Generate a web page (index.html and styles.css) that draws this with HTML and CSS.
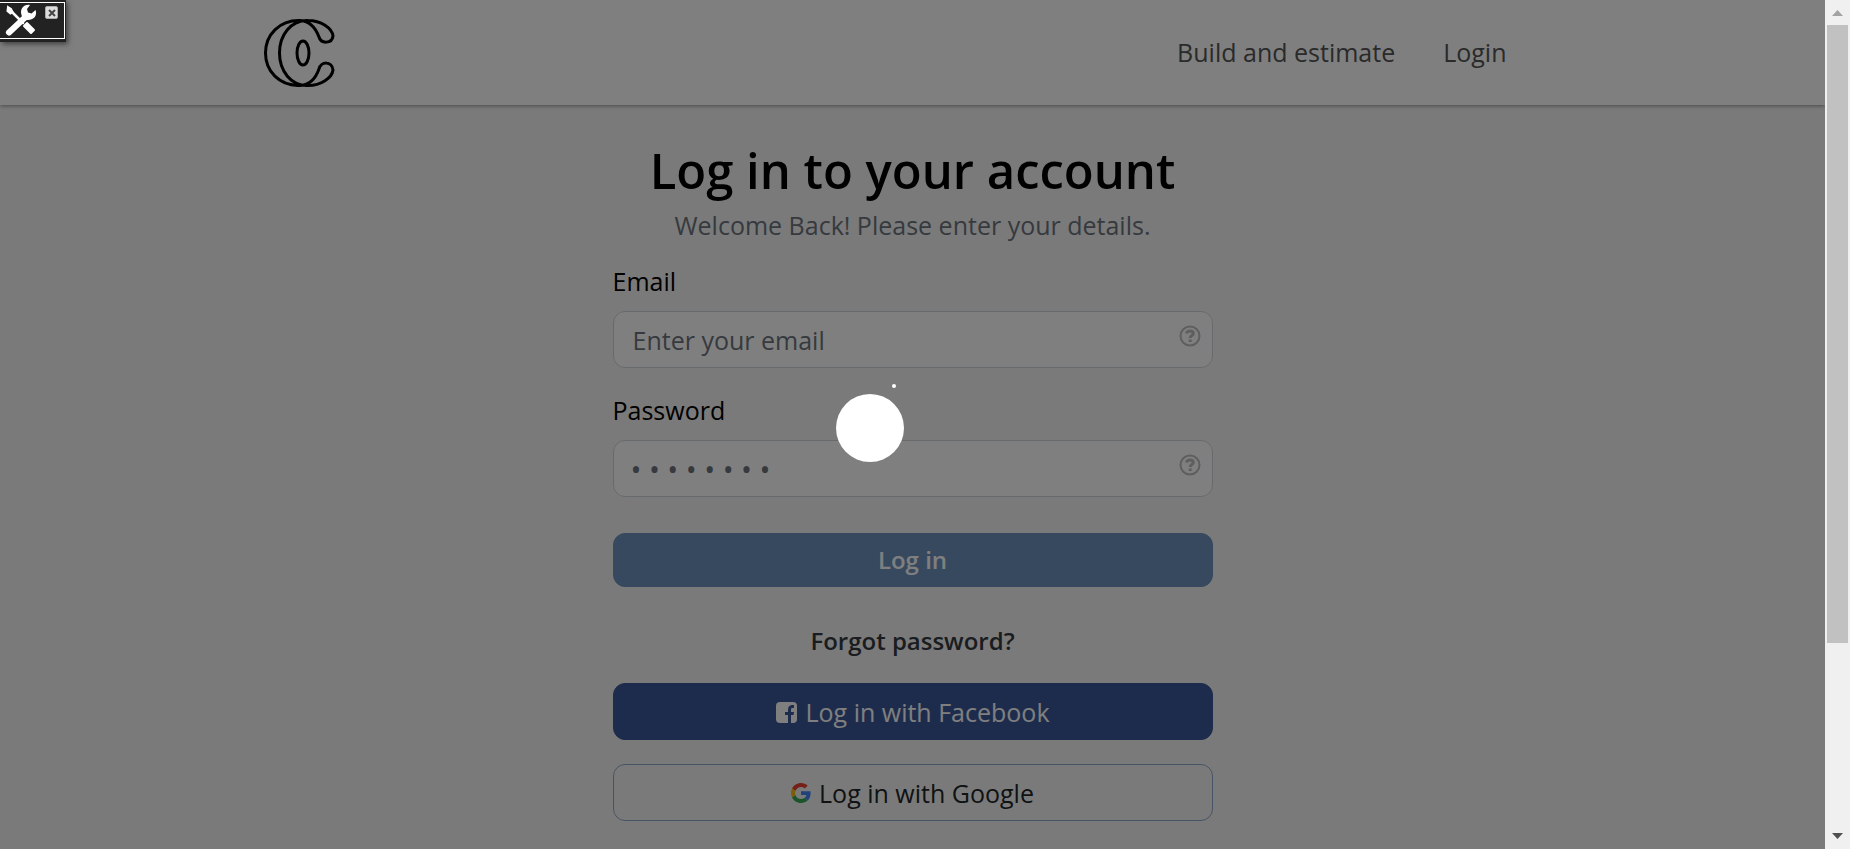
FILE: index.html
```html
<!DOCTYPE html>
<html lang="en">
<head>
<meta charset="utf-8">
<title>Log in to your account</title>
<link rel="stylesheet" href="styles.css">
</head>
<body>
<div class="page">
  <header class="header">
    <div class="container">
      <a class="brand" href="#" aria-label="Home">
        <svg width="72" height="70" viewBox="0 0 72 70" fill="none" stroke="#000" stroke-width="3">
          <path d="M37 68.500C16 69 2.500 54 2.500 36S16 3 37 3.500C48 4 53 12 56 20C58 27 69 27 70 19C69 11 58 3.500 45 3.500C28 3 16.500 18 16.500 36S28 69 45 68.500C58 68.500 69 61 70 53C69 44 58 44 56 52C53.500 59 48 68 37 68.500Z"/>
          <ellipse cx="40" cy="36" rx="6" ry="12"/>
        </svg>
      </a>
      <nav class="nav">
        <a href="#">Build and estimate</a>
        <a href="#">Login</a>
      </nav>
    </div>
  </header>
  <main class="main">
    <form class="login">
      <h1 class="title">Log in to your account</h1>
      <p class="lead">Welcome Back! Please enter your details.</p>
      <label class="label" for="email">Email</label>
      <div class="field">
        <input class="input" id="email" type="email" placeholder="Enter your email">
        <svg class="hint" width="22" height="22" viewBox="0 0 22 22" fill="none" stroke="#bdbdbd"><circle cx="11" cy="11" r="9.500" stroke-width="2"/><path d="M7.500 8.500C8 6.500 9.300 6 11 6C13 6 14.300 7 14.300 8.500C14.300 10.700 11.200 10.500 11.200 13M11.200 14.500V17" stroke-width="3"/></svg>
      </div>
      <label class="label" for="password">Password</label>
      <div class="field">
        <input class="input dots" id="password" type="password" placeholder="• • • • • • • •">
        <svg class="hint" width="22" height="22" viewBox="0 0 22 22" fill="none" stroke="#bdbdbd"><circle cx="11" cy="11" r="9.500" stroke-width="2"/><path d="M7.500 8.500C8 6.500 9.300 6 11 6C13 6 14.300 7 14.300 8.500C14.300 10.700 11.200 10.500 11.200 13M11.200 14.500V17" stroke-width="3"/></svg>
      </div>
      <button class="button submit" type="submit">Log in</button>
      <a class="forgot" href="#">Forgot password?</a>
      <button class="button facebook" type="button">
        <svg width="22" height="22" viewBox="0 0 22 22"><rect x="1" y="1" width="21" height="21" rx="4" fill="#fff"/><path d="M13 22V14H10V11H13V8.500C13 5.500 14.800 4 17.300 4H19V7H17.500C16.300 7 16 7.600 16 8.600V11H19L18.500 14H16V22Z" fill="#3b5998"/></svg>
        <span>Log in with Facebook</span>
      </button>
      <button class="button google" type="button">
        <svg width="20" height="20" viewBox="0 0 48 48"><path fill="#EA4335" d="M24 9.500c3.540 0 6.710 1.220 9.210 3.600l6.850-6.850C35.900 2.380 30.470 0 24 0 14.620 0 6.510 5.380 2.560 13.220l7.980 6.190C12.430 13.720 17.740 9.500 24 9.500z"/><path fill="#4285F4" d="M46.980 24.550c0-1.570-.15-3.090-.38-4.550H24v9.020h12.940c-.58 2.960-2.260 5.480-4.780 7.180l7.730 6c4.510-4.180 7.090-10.360 7.090-17.650z"/><path fill="#FBBC05" d="M10.530 28.590c-.48-1.450-.76-2.990-.76-4.590s.27-3.140.76-4.590l-7.980-6.190C.92 16.460 0 20.120 0 24s.92 7.540 2.560 10.780l7.970-6.190z"/><path fill="#34A853" d="M24 48c6.480 0 11.930-2.130 15.890-5.810l-7.730-6c-2.150 1.450-4.920 2.300-8.160 2.300-6.260 0-11.570-4.220-13.470-9.910l-7.980 6.190C6.510 42.620 14.620 48 24 48z"/></svg>
        <span>Log in with Google</span>
      </button>
    </form>
  </main>
  <div class="overlay">
    <svg width="68" height="80" viewBox="0 0 68 80" fill="#fff"><circle cx="34" cy="45" r="34"/><circle cx="58" cy="3" r="2"/></svg>
  </div>
  <div class="tools">
    <div class="tools-inner">
      <svg width="32" height="32" viewBox="0 0 32 32" fill="none" stroke="#fff" stroke-linecap="round"><path d="M3 3L6 5L7.500 8L5.500 9.500L2.500 7Z" fill="#fff" stroke-width="2"/><path d="M6 7L18 19" stroke-width="2.500"/><path d="M19 22L26 29L29 26L22 19Z" fill="#fff" stroke-width="2" stroke-linejoin="round"/><path d="M4 28.500L20 13.500" stroke-width="6"/><path d="M25 1C19 0 14.500 5 16.500 11C17.500 15 22 17 26 15.500C30.500 14 32 10 30.500 6L26.500 9.500L23 8.500L22 5Z" fill="#fff" stroke="none"/></svg>
      <button class="close" type="button" aria-label="Close tools"><svg width="8" height="8" viewBox="0 0 8 8" stroke="#444" stroke-width="2"><path d="M1 1L7 7M7 1L1 7"/></svg></button>
    </div>
  </div>
</div>
<div class="scrollbar" aria-hidden="true">
  <svg class="arrow" width="25" height="25" viewBox="0 0 25 25"><path d="M12.500 10L18 16H7Z" fill="#a3a3a3"/></svg>
  <div class="track"><div class="thumb"></div></div>
  <svg class="arrow" width="25" height="25" viewBox="0 0 25 25"><path d="M7 9H18L12.500 15Z" fill="#505050"/></svg>
</div>
</body>
</html>
```
FILE: styles.css
```css
* { box-sizing: border-box; }

body {
  margin: 0;
  height: 100vh;
  display: grid;
  grid-template-columns: minmax(0, 1fr) 25px;
  overflow: hidden;
  font-family: "Open Sans", "Noto Sans", sans-serif;
  font-size: 25px;
  line-height: 36px;
  color: #000;
}

.page {
  position: relative;
  height: 100vh;
  overflow: hidden;
  background: #f5f5f5;
}

.header {
  padding: 17px 0 18px;
  background: #fff;
  box-shadow: 0 1px 4px rgba(0, 0, 0, 0.4);
}

.container {
  max-width: 1320px;
  margin: 0 auto;
  padding: 0 66px 0 10px;
  display: flex;
  align-items: center;
  justify-content: space-between;
}

.brand { display: flex; }

.nav {
  display: flex;
  gap: 48px;
}

.nav a { color: #555; text-decoration: none; }

.main { padding: 36px 12px 28px; }

.login {
  max-width: 600px;
  margin: 0 auto;
  display: flex;
  flex-direction: column;
}

.title {
  margin: 0;
  text-align: center;
  font-size: 49px;
  line-height: 58px;
  font-weight: 600;
}

.lead {
  margin: 8px 0 20px;
  text-align: center;
  color: #6c757d;
}

.label { margin-bottom: 12px; }

.field {
  position: relative;
  margin-bottom: 24px;
}

.input {
  display: block;
  width: 100%;
  height: 57px;
  padding: 0 44px 0 19px;
  border: 1px solid #ced4da;
  border-radius: 12px;
  background: #fff;
  font: inherit;
}

.input::placeholder { color: #6c757d; opacity: 1; }

.dots { font-size: 29px; padding-left: 17px; }

.hint {
  position: absolute;
  top: 14px;
  right: 12px;
}

.button {
  display: flex;
  align-items: center;
  justify-content: center;
  gap: 8px;
  padding: 10px 10px 9px;
  border: 1px solid;
  border-radius: 12px;
  font: inherit;
}

.submit {
  margin-top: 12px;
  padding: 8px;
  border-color: #6e92be;
  background: #6e92be;
  color: #fff;
  font-size: 24px;
  font-weight: 600;
}

.forgot {
  align-self: center;
  margin: 36px 0 24px;
  color: #343a40;
  font-size: 24px;
  font-weight: 600;
  text-decoration: none;
}

.facebook {
  margin-bottom: 24px;
  border-color: #3b5998;
  background: #3b5998;
  color: #fff;
}

.google {
  border-color: #8fa9ca;
  background: transparent;
  color: #212529;
}

.overlay {
  position: absolute;
  inset: 0;
  display: flex;
  align-items: center;
  justify-content: center;
  padding: 0 85px 3px 0;
  background: rgba(0, 0, 0, 0.5);
}

.tools {
  position: absolute;
  top: 0;
  left: 0;
  padding: 2px 1px 3px 0;
  background: #222;
  box-shadow: 2px 2px 5px rgba(0, 0, 0, 0.5);
}

.tools-inner {
  display: flex;
  align-items: flex-start;
  gap: 8px;
  padding: 1px 6px 2px 5px;
  border: 1px solid #fff;
  border-left: 0;
}

.close {
  display: flex;
  align-items: center;
  justify-content: center;
  width: 13px;
  height: 13px;
  margin-top: 2px;
  padding: 0;
  border: 1px solid #aaa;
  border-radius: 2px;
  background: #ddd;
}

.scrollbar {
  display: flex;
  flex-direction: column;
  background: #f0f0f0;
}

.track { flex: 1; padding: 0 2px; }

.thumb {
  height: 77.4%;
  background: #c1c1c1;
}
```
